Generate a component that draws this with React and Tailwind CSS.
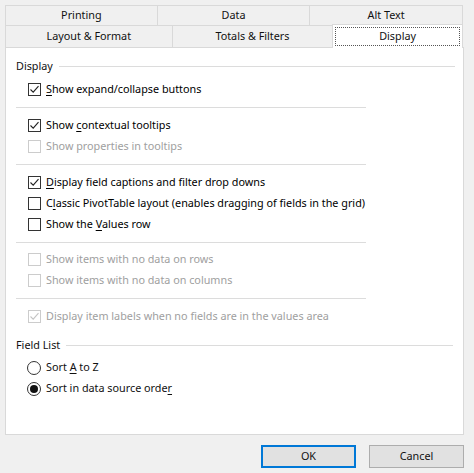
import React from "react";

const U = ({ children }) => <span className="underline underline-offset-2">{children}</span>;

const Check = ({ checked, disabled }) => (
  <span
    className={`w-[13px] h-[13px] border flex items-center justify-center bg-white ${
      disabled ? "border-[#cccccc]" : "border-[#333333]"
    }`}
  >
    {checked && (
      <svg width="11" height="11" viewBox="0 0 11 11">
        <path
          d="M1.5 5.5 L4.2 8.2 L9.5 2.2"
          fill="none"
          stroke={disabled ? "#c4c4c4" : "#222222"}
          strokeWidth="1.1"
        />
      </svg>
    )}
  </span>
);

const Radio = ({ checked }) => (
  <span className="w-[14px] h-[14px] rounded-full border border-[#333333] flex items-center justify-center bg-white">
    {checked && <span className="w-[8px] h-[8px] rounded-full bg-[#111111]" />}
  </span>
);

const Row = ({ checked, disabled, children }) => (
  <div className="h-[21px] flex items-center pl-[12px]">
    <Check checked={checked} disabled={disabled} />
    <span className={`ml-[5px] ${disabled ? "text-[#a0a0a0]" : "text-black"}`}>{children}</span>
  </div>
);

const RadioRow = ({ checked, children }) => (
  <div className="h-[21px] flex items-center pl-[11px]">
    <Radio checked={checked} />
    <span className="ml-[5px]">{children}</span>
  </div>
);

const Sep = ({ h }) => (
  <div className={`${h} flex items-center`}>
    <div className="w-[350px] h-px bg-[#dcdcdc]" />
  </div>
);

const GroupLabel = ({ children, pr }) => (
  <div className={`h-[20px] flex items-center ${pr}`}>
    <span>{children}</span>
    <div className="flex-1 h-px bg-[#dcdcdc] ml-[6px]" />
  </div>
);

const Tab = ({ w, children }) => (
  <div className={`${w} h-full flex items-center justify-center border-t border-l border-r border-[#d9d9d9] bg-[#f0f0f0] -ml-px first:ml-0`}>
    {children}
  </div>
);

export default function App() {
  return (
    <div
      className="w-[474px] h-[473px] bg-[#f0f0f0] text-[10.8px] text-[#111111] overflow-hidden"
      style={{ fontFamily: '"Noto Sans", "Open Sans", sans-serif' }}
    >
      <div className="pt-[5px] pl-[5px] w-[463px]">
        <div className="h-[20px] flex">
          <Tab w="w-[153px]">Printing</Tab>
          <Tab w="w-[154px]">Data</Tab>
          <Tab w="w-[154px]">Alt Text</Tab>
        </div>
        <div className="h-[22px] flex items-end">
          <Tab w="w-[168px]">Layout &amp; Format</Tab>
          <Tab w="w-[162px]">Totals &amp; Filters</Tab>
          <div className="w-[131px] h-[24px] -ml-px -mb-px relative z-10 bg-white border-t border-l border-r border-[#d9d9d9] p-[2px]">
            <div className="h-full border border-dotted border-[#555555] flex items-center justify-center">
              Display
            </div>
          </div>
        </div>
      </div>

      <div className="ml-[5px] w-[459px] h-[388px] bg-white border border-[#d9d9d9] pl-[10px] pt-[8px]">
        <GroupLabel pr="pr-[8px]">Display</GroupLabel>
        <div className="h-[3px]" />
        <Row checked>
          <U>S</U>how expand/collapse buttons
        </Row>
        <Sep h="h-[15px]" />
        <Row checked>
          Show <U>c</U>ontextual tooltips
        </Row>
        <Row disabled>Show properties in tooltips</Row>
        <Sep h="h-[15px]" />
        <Row checked>
          <U>D</U>isplay field captions and filter drop downs
        </Row>
        <Row>
          C<U>l</U>assic PivotTable layout (enables dragging of fields in the grid)
        </Row>
        <Row>
          Show the <U>V</U>alues row
        </Row>
        <Sep h="h-[14px]" />
        <Row disabled>Show items with no data on rows</Row>
        <Row disabled>Show items with no data on columns</Row>
        <Sep h="h-[15px]" />
        <Row checked disabled>
          Display item labels when no fields are in the values area
        </Row>
        <div className="h-[8px]" />
        <GroupLabel pr="pr-[10px]">Field List</GroupLabel>
        <div className="h-[2px]" />
        <RadioRow>
          Sort <U>A</U> to Z
        </RadioRow>
        <RadioRow checked>
          Sort in data source orde<U>r</U>
        </RadioRow>
      </div>

      <div className="flex justify-end gap-[13px] pr-[10px] mt-[10px]">
        <button className="w-[95px] h-[23px] bg-[#e1e1e1] border border-[#0078d7] outline outline-1 -outline-offset-2 outline-[#0078d7]">
          OK
        </button>
        <button className="w-[95px] h-[23px] bg-[#e1e1e1] border border-[#adadad]">Cancel</button>
      </div>
    </div>
  );
}
